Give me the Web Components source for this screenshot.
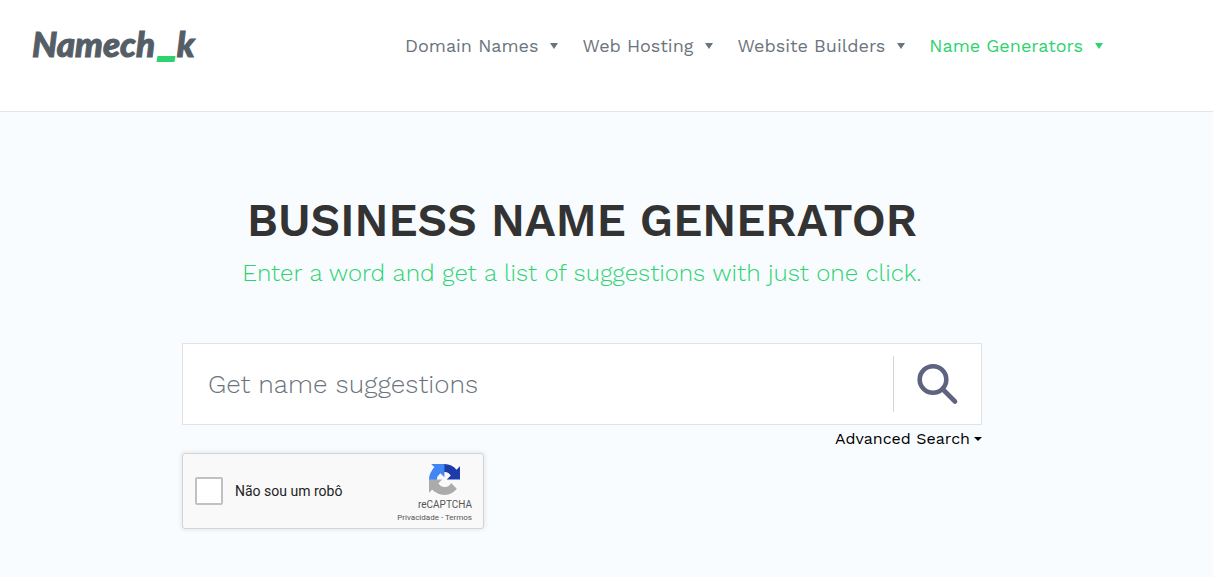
<!DOCTYPE html>
<html lang="en">
<head>
  <meta charset="utf-8">
  <meta name="viewport" content="width=device-width, initial-scale=1">
  <title>Business Name Generator</title>
  <style>
    :root {
      --ink: #333333;
      --muted: #6b747d;
      --green: #2dd36f;
      --line: #e1e4e8;
      --page: #f8fcff;
      --font: "Work Sans", Inter, "Liberation Sans", sans-serif;
    }

    body {
      margin: 0;
      min-height: 100vh;
      background: var(--page);
      color: var(--ink);
      font-family: var(--font);
    }
  </style>
</head>
<body>
  <site-header>
    <site-logo slot="logo"></site-logo>
    <nav-item>Domain Names</nav-item>
    <nav-item>Web Hosting</nav-item>
    <nav-item>Website Builders</nav-item>
    <nav-item active>Name Generators</nav-item>
  </site-header>

  <generator-hero>
    <span slot="title">BUSINESS NAME GENERATOR</span>
    <span slot="tagline">Enter a word and get a list of suggestions with just one click.</span>
    <search-form placeholder="Get name suggestions"></search-form>
    <robot-check label="Não sou um robô"></robot-check>
  </generator-hero>

  <script>
    class SiteHeader extends HTMLElement {
      constructor() {
        super();
        this.attachShadow({ mode: 'open' });
        this.shadowRoot.innerHTML = `
          <style>
            :host {
              display: block;
              background: white;
              border-bottom: 1px solid var(--line);
            }

            header {
              display: flex;
              align-items: flex-start;
              justify-content: space-between;
              padding: 23px 110px 48px 32px;
            }

            nav {
              display: flex;
              gap: 24px;
              padding-top: 11px;
            }
          </style>
          <header>
            <slot name="logo"></slot>
            <nav aria-label="Main"><slot></slot></nav>
          </header>
        `;
      }
    }

    class SiteLogo extends HTMLElement {
      constructor() {
        super();
        this.attachShadow({ mode: 'open' });
        this.shadowRoot.innerHTML = `
          <style>
            :host {
              display: block;
            }

            a {
              display: block;
              color: #555d66;
              font: italic 900 35px/40px Lato, sans-serif;
              text-decoration: none;
              -webkit-text-stroke: 1px currentColor;
            }

            .blank {
              position: relative;
              padding: 0 3px;
              color: transparent;
            }

            /* Thick slanted bar in place of the thin underscore */
            .blank::after {
              content: '';
              position: absolute;
              left: 2px;
              right: 2px;
              bottom: 2px;
              height: 6px;
              background: var(--green);
              transform: skewX(-10deg);
            }
          </style>
          <a href="#">Namech<span class="blank">_</span>k</a>
        `;
      }
    }

    class NavItem extends HTMLElement {
      constructor() {
        super();
        this.attachShadow({ mode: 'open' });
        this.shadowRoot.innerHTML = `
          <style>
            :host {
              display: block;
              color: var(--muted);
            }

            :host([active]) {
              color: var(--green);
            }

            a {
              display: flex;
              align-items: center;
              gap: 12px;
              color: inherit;
              font-size: 18px;
              line-height: 24px;
              text-decoration: none;
              white-space: nowrap;
            }

            .arrow {
              border: 4px solid transparent;
              border-top: 6px solid currentColor;
              border-bottom: 0;
            }
          </style>
          <a href="#"><slot></slot><span class="arrow"></span></a>
        `;
      }
    }

    class GeneratorHero extends HTMLElement {
      constructor() {
        super();
        this.attachShadow({ mode: 'open' });
        this.shadowRoot.innerHTML = `
          <style>
            :host {
              display: block;
            }

            main {
              max-width: 800px;
              margin: 0 auto;
              padding: 79px 24px 48px;
            }

            .wrap {
              padding-right: 49px;
            }

            h1,
            p {
              margin: 0;
              text-align: center;
            }

            h1 {
              font-size: 46px;
              font-weight: 600;
              line-height: 58px;
            }

            p {
              margin: 9px 0 55px;
              color: var(--green);
              font-size: 24px;
              font-weight: 300;
              line-height: 30px;
            }
          </style>
          <div class="wrap">
            <main>
              <h1><slot name="title"></slot></h1>
              <p><slot name="tagline"></slot></p>
              <slot></slot>
            </main>
          </div>
        `;
      }
    }

    class SearchForm extends HTMLElement {
      constructor() {
        super();
        this.attachShadow({ mode: 'open' });
        const placeholder = this.getAttribute('placeholder') || '';
        this.shadowRoot.innerHTML = `
          <style>
            :host {
              display: block;
            }

            form {
              display: flex;
              flex-direction: column;
            }

            .field {
              display: flex;
              align-items: center;
              background: white;
              border: 1px solid #e2e2e4;
            }

            input {
              flex: 1;
              min-width: 0;
              height: 80px;
              box-sizing: border-box;
              padding: 0 25px;
              border: 0;
              background: none;
              color: var(--ink);
              font-family: inherit;
              font-size: 26px;
              font-weight: 300;
            }

            input::placeholder {
              color: var(--muted);
              opacity: 1;
            }

            button {
              border: 0;
              background: none;
              padding: 0;
              cursor: pointer;
            }

            .submit {
              display: flex;
              align-items: center;
              justify-content: center;
              width: 88px;
              height: 56px;
              border-left: 1px solid #d5d5d8;
            }

            .advanced {
              display: flex;
              align-items: center;
              align-self: flex-end;
              gap: 4px;
              padding-top: 2px;
              color: black;
              font-family: inherit;
              font-size: 16px;
              line-height: 24px;
            }

            .arrow {
              border: 4px solid transparent;
              border-top-color: currentColor;
              border-bottom: 0;
            }
          </style>
          <form>
            <div class="field">
              <input type="text" placeholder="${placeholder}" aria-label="${placeholder}">
              <button class="submit" type="button" aria-label="Search">
                <svg width="42" height="42" viewBox="0 0 42 42" fill="none" stroke="#5f6380">
                  <circle cx="16" cy="16.5" r="13.3" stroke-width="4.6"/>
                  <path d="M26 26.5 38 38.5" stroke-width="4.6" stroke-linecap="round"/>
                </svg>
              </button>
            </div>
            <button class="advanced" type="button">Advanced Search<span class="arrow"></span></button>
          </form>
        `;
      }
    }

    class RobotCheck extends HTMLElement {
      constructor() {
        super();
        this.attachShadow({ mode: 'open' });
        const label = this.getAttribute('label') || '';
        this.shadowRoot.innerHTML = `
          <style>
            :host {
              display: flex;
              align-items: center;
              justify-content: space-between;
              box-sizing: border-box;
              width: 302px;
              max-width: 100%;
              height: 76px;
              margin-top: 2px;
              padding: 0 11px 0 12px;
              background: #f9f9f9;
              border: 1px solid #d3d3d3;
              border-radius: 3px;
              box-shadow: 0 0 4px 1px rgba(0, 0, 0, 0.08);
              color: #555;
              font-family: Roboto, sans-serif;
            }

            label {
              display: flex;
              align-items: center;
              gap: 12px;
              color: #222;
              font-size: 14px;
              line-height: 17px;
            }

            input {
              appearance: none;
              width: 28px;
              height: 28px;
              margin: 0;
              background: white;
              border: 2px solid #c1c1c1;
              border-radius: 2px;
            }

            .brand {
              display: flex;
              flex-direction: column;
              align-items: flex-end;
              padding-top: 6px;
            }

            svg {
              margin: 0 12px 3px 0;
            }

            .name {
              font-size: 10px;
              line-height: 14px;
            }

            .terms {
              font-size: 8px;
              line-height: 12px;
            }

            a {
              color: inherit;
              text-decoration: none;
            }
          </style>
          <label><input type="checkbox">${label}</label>
          <div class="brand">
            <svg width="31" height="31" viewBox="0 0 64 64">
              <path fill="#1c3aa9" d="M64 31.955l-.033-1.37V4.687l-7.16 7.16C50.948 4.674 42.033.093 32.05.093c-10.4 0-19.622 4.96-25.458 12.64l11.736 11.86a15.55 15.55 0 0 1 4.754-5.334c2.05-1.6 4.952-2.906 8.968-2.906.485 0 .86.057 1.135.163 4.976.393 9.288 3.14 11.828 7.124l-8.307 8.307L64 31.953"/>
              <path fill="#4285f4" d="M31.862.094l-1.37.033H4.594l7.16 7.16C4.58 13.147 0 22.06 0 32.046c0 10.4 4.96 19.622 12.64 25.458L24.5 45.768a15.55 15.55 0 0 1-5.334-4.754c-1.6-2.05-2.906-4.952-2.906-8.968 0-.485.057-.86.163-1.135.393-4.976 3.14-9.288 7.124-11.828l8.307 8.307L31.86.095"/>
              <path fill="#ababab" d="M.001 32.045l.033 1.37v25.898l7.16-7.16c5.86 7.173 14.774 11.754 24.76 11.754 10.4 0 19.622-4.96 25.458-12.64l-11.736-11.86a15.55 15.55 0 0 1-4.754 5.334c-2.05 1.6-4.952 2.906-8.968 2.906-.485 0-.86-.057-1.135-.163-4.976-.393-9.288-3.14-11.828-7.124l8.307-8.307c-10.522.04-22.4.066-27.295-.005"/>
            </svg>
            <div class="name">reCAPTCHA</div>
            <div class="terms"><a href="#">Privacidade</a> - <a href="#">Termos</a></div>
          </div>
        `;
      }
    }

    customElements.define('site-header', SiteHeader);
    customElements.define('site-logo', SiteLogo);
    customElements.define('nav-item', NavItem);
    customElements.define('generator-hero', GeneratorHero);
    customElements.define('search-form', SearchForm);
    customElements.define('robot-check', RobotCheck);
  </script>
</body>
</html>
